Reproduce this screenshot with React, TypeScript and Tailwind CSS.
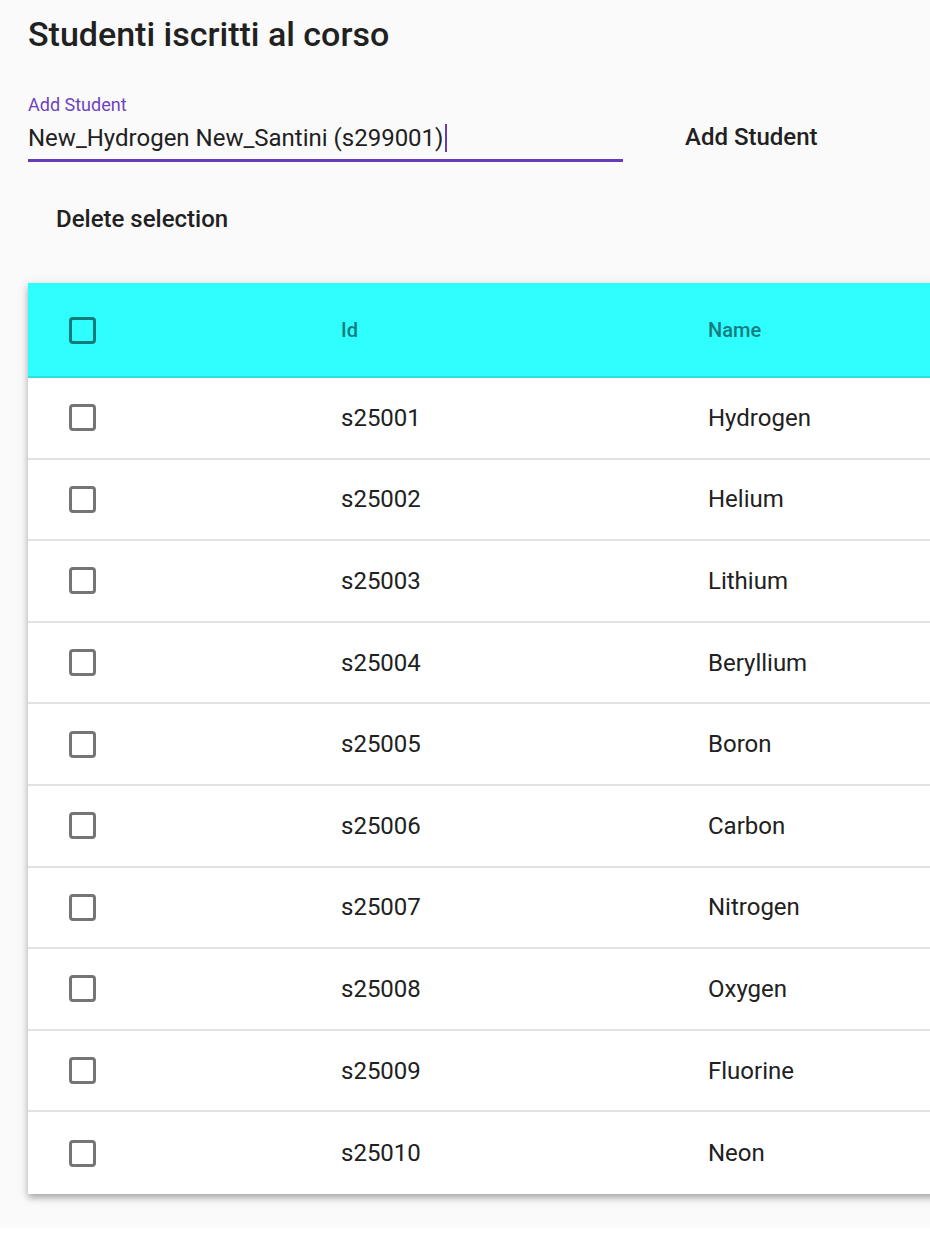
import React from "react";

const rows = [
  ["s25001", "Hydrogen"],
  ["s25002", "Helium"],
  ["s25003", "Lithium"],
  ["s25004", "Beryllium"],
  ["s25005", "Boron"],
  ["s25006", "Carbon"],
  ["s25007", "Nitrogen"],
  ["s25008", "Oxygen"],
  ["s25009", "Fluorine"],
  ["s25010", "Neon"],
];

function Box({ header }: { header?: boolean }) {
  return (
    <div
      className={
        "w-[27px] h-[27px] rounded-[4px] border-[3px] " +
        (header ? "border-[#137a7a]" : "border-[#757575]")
      }
    />
  );
}

export default function App() {
  return (
    <div
      className="w-[930px] h-[1228px] bg-[#fafafa] overflow-hidden text-[#212121]"
      style={{ fontFamily: "Roboto, 'Noto Sans', sans-serif" }}
    >
      <div className="pl-[28px] pt-[12px]">
        <h1 className="text-[34px] leading-[44px] font-medium text-[#212121]">
          Studenti iscritti al corso
        </h1>
      </div>

      <div className="flex items-start pl-[28px] mt-[38px]">
        <div className="w-[595px]">
          <div className="text-[18px] leading-[22px] text-[#6e44be]">Add Student</div>
          <div className="h-[46px] flex items-center border-b-[3px] border-[#673ab7]">
            <span className="text-[24px] leading-[30px] text-[#212121]">
              New_Hydrogen New_Santini (s299001)
            </span>
            <span className="inline-block w-[2px] h-[28px] bg-[#673ab7] ml-[2px]" />
          </div>
        </div>
        <div className="ml-[62px] mt-[28px] text-[24px] leading-[30px] font-medium text-[#212121]">
          Add Student
        </div>
      </div>

      <div className="pl-[56px] mt-[42px] text-[24px] leading-[30px] font-medium text-[#212121]">
        Delete selection
      </div>

      <div className="ml-[28px] mt-[49px] w-[1000px] bg-white shadow-[0_4px_6px_rgba(0,0,0,0.25),0_2px_12px_rgba(0,0,0,0.12)]">
        <div className="h-[95px] bg-[#2ffeff] border-b-2 border-[#2ae0e0] grid grid-cols-[313px_367px_1fr] items-center">
          <div className="pl-[41px] pt-[2px]">
            <Box header />
          </div>
          <div className="text-[20px] font-medium text-[#127d7e]">Id</div>
          <div className="text-[20px] font-medium text-[#127d7e]">Name</div>
        </div>
        {rows.map(([id, name], i) => (
          <div
            key={id}
            className={
              "h-[81.6px] grid grid-cols-[313px_367px_1fr] items-center " +
              (i < rows.length - 1 ? "border-b-2 border-[#e2e2e2]" : "")
            }
          >
            <div className="pl-[41px]">
              <Box />
            </div>
            <div className="text-[24px] text-[#212121]">{id}</div>
            <div className="text-[24px] text-[#212121]">{name}</div>
          </div>
        ))}
      </div>
    </div>
  );
}
